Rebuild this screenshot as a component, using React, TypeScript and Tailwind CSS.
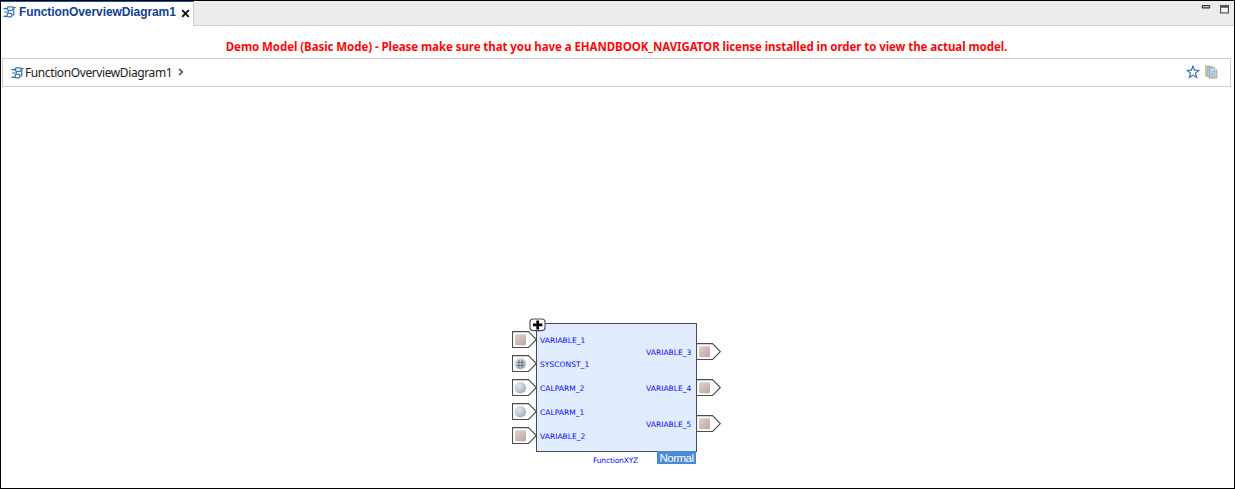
import React from "react";

type PortKind = "variable" | "sysconst" | "calparm";
interface Port {
  name: string;
  kind: PortKind;
  y: number;
}

const inputs: Port[] = [
  { name: "VARIABLE_1", kind: "variable", y: 253 },
  { name: "SYSCONST_1", kind: "sysconst", y: 277 },
  { name: "CALPARM_2", kind: "calparm", y: 301 },
  { name: "CALPARM_1", kind: "calparm", y: 325 },
  { name: "VARIABLE_2", kind: "variable", y: 349 },
];

const outputs: Port[] = [
  { name: "VARIABLE_3", kind: "variable", y: 265 },
  { name: "VARIABLE_4", kind: "variable", y: 301 },
  { name: "VARIABLE_5", kind: "variable", y: 337 },
];

function DiagramIcon() {
  return (
    <svg width="13" height="12" viewBox="0 0 13 12" fill="none" stroke="#3b74ae" strokeWidth="1.2" className="shrink-0">
      <rect x="4.6" y="0.8" width="5.4" height="3.6" rx="0.8" />
      <rect x="4.2" y="7.4" width="4.6" height="3.4" rx="0.8" />
      <path d="M10 1.5H12.8M8.8 9H10.8V2M0.4 2.6H4.6M1 6H5.5V4.4M0.4 10.4H4.2" />
      <path d="M2.8 1.6V3.6M2.6 9.4V11.4" strokeWidth="0.8" />
    </svg>
  );
}

function PortShape({ kind }: { kind: PortKind }) {
  return (
    <svg width="25" height="18" viewBox="0 0 25 18" className="block">
      <defs>
        <linearGradient id="variableFill" x1="0" y1="0" x2="1" y2="1">
          <stop offset="0" stopColor="#e2d1cc" />
          <stop offset="1" stopColor="#bda6a1" />
        </linearGradient>
        <radialGradient id="ballFill" cx="0.35" cy="0.3" r="0.75">
          <stop offset="0" stopColor="#e3eaee" />
          <stop offset="1" stopColor="#a3afb9" />
        </radialGradient>
      </defs>
      <path d="M0.5 0.6H16.5L24.3 8.6L16.5 16.5H0.5Z" fill="#fff" stroke="#4c4c4c" strokeWidth="1.1" />
      {kind === "variable" && <rect x="3" y="3.2" width="11" height="11" rx="1.4" fill="url(#variableFill)" />}
      {kind !== "variable" && <circle cx="8.4" cy="8.7" r="5.7" fill="url(#ballFill)" />}
      {kind === "sysconst" && (
        <path d="M7 5V12.4M10 5V12.4M4.7 7.2H12.1M4.7 10.2H12.1" stroke="#6a7176" strokeWidth="1.1" />
      )}
    </svg>
  );
}

function TabBar() {
  return (
    <div className="flex h-[25px] shrink-0">
      <div className="flex w-[193px] items-center border-t border-r border-t-[#23549c] border-r-[#cfcfcf] bg-white pb-[4px] pl-[2px]">
        <DiagramIcon />
        <span className="ml-[3px] w-[158px] whitespace-nowrap font-['Liberation_Sans',sans-serif] text-[12px] font-bold leading-[14px] tracking-[-0.08px] text-[#123f96]">
          FunctionOverviewDiagram1
        </span>
        <svg width="9" height="9" viewBox="0 0 9 9" className="ml-[4px] mt-[2px] shrink-0">
          <path d="M1.2 1.2L7.8 7.8M7.8 1.2L1.2 7.8" stroke="#111" strokeWidth="1.9" />
        </svg>
      </div>
      <div className="flex flex-1 items-start justify-end gap-[9px] border-b border-[#cecece] bg-[#ececec] pr-[5px] pt-[3px]">
        <svg width="10" height="10" viewBox="0 0 10 10">
          <rect x="1.3" y="1.6" width="7.4" height="2.3" rx="0.4" fill="#fff" stroke="#333" strokeWidth="1.1" />
        </svg>
        <svg width="9" height="10" viewBox="0 0 9 10">
          <rect x="0.6" y="1.6" width="7.8" height="7.3" fill="#fff" stroke="#444" strokeWidth="1.1" />
          <rect x="0.3" y="1" width="8.4" height="2.8" fill="#555" />
        </svg>
      </div>
    </div>
  );
}

function Breadcrumb() {
  return (
    <div className="ml-px mr-[3px] flex h-[29px] shrink-0 items-center border border-[#cdcdcd] bg-white pl-[8px] pr-[12px]">
      <DiagramIcon />
      <span className="w-[148px] whitespace-nowrap pl-px font-['Noto_Sans',sans-serif] text-[12px] leading-[16px] tracking-[-0.4px] text-[#222]">
        FunctionOverviewDiagram1
      </span>
      <svg width="6" height="8" viewBox="0 0 6 8" className="ml-[6px] -mt-px">
        <path d="M1 1L4.4 4L1 7" fill="none" stroke="#333" strokeWidth="1.3" />
      </svg>
      <div className="ml-auto flex items-center gap-[5px] pb-px">
        <svg width="14" height="14" viewBox="0 0 14 14">
          <path
            d="M7 1.2L8.6 5.1L12.8 5.4L9.5 8.1L10.6 12.5L7 10.1L3.4 12.5L4.5 8.1L1.2 5.4L5.4 5.1Z"
            fill="#fff"
            stroke="#3f6cba"
            strokeWidth="1.2"
          />
        </svg>
        <svg width="13" height="14" viewBox="0 0 13 14">
          <path d="M0.7 1H5.5V11H0.7Z" fill="#b8d1de" stroke="#d4ae66" />
          <path d="M2.7 1.7H7.5V12H2.7Z" fill="#acd0e4" stroke="#96aab6" strokeWidth="0.8" />
          <path d="M4.7 2.7H9.2L11.9 5.2V12.8H4.7Z" fill="#c7dce7" stroke="#879ba8" strokeWidth="0.8" />
          <path d="M9.2 2.5V5.3H12" fill="#fff" stroke="#d4ae66" />
          <path d="M6 6.8H10.6M6 8.8H10.6M6 10.8H10.6" stroke="#85b2cd" strokeWidth="0.9" />
          <path d="M4.5 13.1H12" stroke="#cbad70" strokeWidth="0.8" />
        </svg>
      </div>
    </div>
  );
}

function Canvas() {
  const label = "absolute whitespace-nowrap text-[7.5px] leading-[10px] text-[#0808ff]";
  return (
    <div className="relative flex-1 overflow-hidden bg-white font-['DejaVu_Sans',sans-serif]">
      <div className="absolute left-[535px] top-[236px] h-[129px] w-[161px] border border-[#444b55] bg-[#e1ecff]" />
      {inputs.map((p) => (
        <React.Fragment key={p.name}>
          <div className="absolute left-[511px]" style={{ top: p.y - 9 }}>
            <PortShape kind={p.kind} />
          </div>
          <span className={`${label} left-[539px] tracking-[0.05px]`} style={{ top: p.y - 4 }}>
            {p.name}
          </span>
        </React.Fragment>
      ))}
      {outputs.map((p) => (
        <React.Fragment key={p.name}>
          <div className="absolute left-[695px]" style={{ top: p.y - 9 }}>
            <PortShape kind={p.kind} />
          </div>
          <span className={`${label} left-[645px] tracking-[0.05px]`} style={{ top: p.y - 4 }}>
            {p.name}
          </span>
        </React.Fragment>
      ))}
      <svg width="17" height="14" viewBox="0 0 17 14" className="absolute left-[528px] top-[231px]">
        <rect x="1" y="1" width="15" height="11.6" rx="3" fill="#fff" stroke="#4b4b4b" strokeWidth="1.1" />
        <path d="M8.7 2.4V11.4M4 6.9H13.4" stroke="#000" strokeWidth="2.7" />
      </svg>
      <span className={`${label} left-[592px] top-[369px] tracking-[-0.15px]`}>FunctionXYZ</span>
      <div className="absolute left-[656px] top-[364px] flex h-[13px] w-[39px] items-center justify-center bg-[#4a8ad8] font-['Liberation_Sans',sans-serif] text-[11.5px] leading-[12px] tracking-[-0.5px] text-white">
        Normal
      </div>
    </div>
  );
}

export default function App() {
  return (
    <div className="flex h-[489px] w-[1235px] flex-col overflow-hidden border border-black bg-white">
      <TabBar />
      <div className="flex h-[32px] shrink-0 items-center justify-center pr-[2px] pt-[10px]">
        <p className="whitespace-nowrap font-['Noto_Sans',sans-serif] text-[11.5px] font-bold leading-[16px] tracking-[-0.07px] text-[#ff0808]">
          Demo Model (Basic Mode) - Please make sure that you have a EHANDBOOK_NAVIGATOR license installed in order to view the actual model.
        </p>
      </div>
      <Breadcrumb />
      <Canvas />
    </div>
  );
}
